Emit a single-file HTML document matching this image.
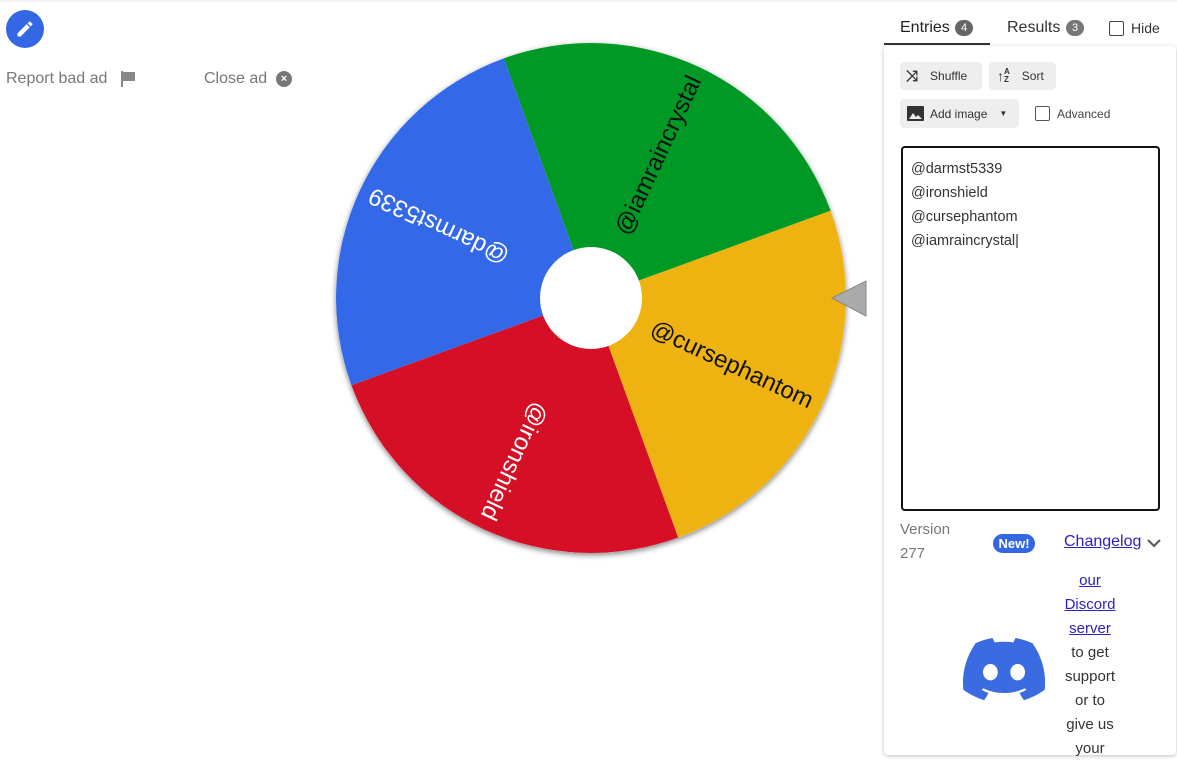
<!DOCTYPE html>
<html><head><meta charset="utf-8"><style>
body{margin:0;width:1177px;height:766px;overflow:hidden;background:#fff;font-family:"Liberation Sans",sans-serif;position:relative}
.a{position:absolute}
.btn{position:absolute;background:#eeeeee;border-radius:4px;font-size:12px;color:#333;display:flex;align-items:center}
a{color:#2a1fc0;text-decoration:underline}
</style></head><body>
<div class="a" style="left:0;top:0;width:1177px;height:3px;background:linear-gradient(#eee,#fff)"></div>
<div class="a" style="left:6px;top:10px;width:38px;height:38px;border-radius:50%;background:#3367e4"></div>
<svg class="a" style="left:15px;top:19px" width="20" height="20" viewBox="0 0 24 24"><path fill="#fff" d="M3 17.25V21h3.75L17.81 9.94l-3.75-3.75L3 17.25zM20.71 7.04a1 1 0 000-1.41l-2.34-2.34a1 1 0 00-1.41 0l-1.83 1.83 3.75 3.75 1.83-1.83z"/></svg>
<div class="a" style="left:6px;top:70px;font-size:16px;color:#777">Report bad ad</div>
<svg class="a" style="left:120px;top:70px" width="18" height="18" viewBox="0 0 18 18"><rect x="1" y="1" width="2" height="16" fill="#888"/><path d="M3 2h12v9H3z" fill="#888"/></svg>
<div class="a" style="left:204px;top:70px;font-size:16px;color:#777">Close ad</div>
<div class="a" style="left:276px;top:71px;width:16px;height:16px;border-radius:50%;background:#777;color:#fff;font-size:11px;text-align:center;line-height:16px;font-weight:bold">×</div>

<svg class="a" style="left:0;top:0" width="880" height="766">
<defs><filter id="s" x="-10%" y="-10%" width="120%" height="120%"><feDropShadow dx="0" dy="2" stdDeviation="3" flood-opacity="0.5"/></filter></defs>
<g transform="translate(591,298)">
<circle r="255" fill="#fff" filter="url(#s)"/>
<path d="M0 0 L-87.2 -239.6 A255 255 0 0 1 239.6 -87.2Z" fill="#009925"/>
<path d="M0 0 L239.6 -87.2 A255 255 0 0 1 87.2 239.6Z" fill="#eeb211"/>
<path d="M0 0 L87.2 239.6 A255 255 0 0 1 -239.6 87.2Z" fill="#d50f25"/>
<path d="M0 0 L-239.6 87.2 A255 255 0 0 1 -87.2 -239.6Z" fill="#3369e8"/>
<circle r="51" fill="#fff"/>
<g font-size="24" dominant-baseline="middle" text-anchor="end" font-family="Liberation Sans,sans-serif">
<text transform="rotate(-65)" x="244" y="2" fill="#111">@iamraincrystal</text>
<text transform="rotate(25)" x="244" y="2" fill="#111">@cursephantom</text>
<text transform="rotate(115)" x="244" y="2" fill="#fff">@ironshield</text>
<text transform="rotate(205)" x="244" y="2" fill="#fff">@darmst5339</text>
</g></g>
<path d="M832 298 L866 281 L866 316Z" fill="#aaa" stroke="#888" stroke-width="1"/>
</svg>

<div class="a" style="left:900px;top:19px;font-size:16px;color:#222">Entries</div>
<div class="a" style="left:955px;top:20px;width:18px;height:16px;border-radius:8px;background:#666;color:#fff;font-size:11px;text-align:center;line-height:16px">4</div>
<div class="a" style="left:884px;top:43px;width:106px;height:2px;background:#333"></div>
<div class="a" style="left:1007px;top:19px;font-size:16px;color:#333">Results</div>
<div class="a" style="left:1066px;top:20px;width:18px;height:16px;border-radius:8px;background:#777;color:#fff;font-size:11px;text-align:center;line-height:16px">3</div>
<div class="a" style="left:1109px;top:21px;width:13px;height:13px;border:1.5px solid #444;border-radius:2px"></div>
<div class="a" style="left:1131px;top:20px;font-size:14px;color:#333">Hide</div>

<div class="a" style="left:884px;top:46px;width:292px;height:709px;background:#fff;border-radius:4px;box-shadow:0 1px 4px rgba(0,0,0,.25)"></div>
<div class="btn" style="left:900px;top:62px;width:82px;height:28px"><span style="margin-left:6px;font-size:15px;font-weight:bold">⤨</span><span style="margin-left:12px">Shuffle</span></div>
<div class="btn" style="left:989px;top:62px;width:67px;height:28px"><span style="margin-left:8px;font-size:14px;font-weight:bold">↑</span><span style="font-size:8px;font-weight:bold;line-height:8px">A<br>Z</span><span style="margin-left:12px">Sort</span></div>
<div class="btn" style="left:900px;top:99px;width:119px;height:29px"><svg style="margin-left:7px" width="17" height="15" viewBox="0 0 17 15"><rect width="17" height="15" rx="1" fill="#333"/><path d="M2 13 L6 7 L9 11 L11 9 L15 13Z" fill="#eee"/></svg><span style="margin-left:6px">Add image</span><span style="margin-left:12px;font-size:8px">▼</span></div>
<div class="a" style="left:1035px;top:106px;width:13px;height:13px;border:1.5px solid #555;border-radius:2px"></div>
<div class="a" style="left:1057px;top:107px;font-size:12px;color:#444">Advanced</div>
<div class="a" style="left:901px;top:146px;width:259px;height:365px;border:2px solid #111;border-radius:4px;font-size:14.5px;color:#333;line-height:24px;padding:9px 0 0 8px;box-sizing:border-box">@darmst5339<br>@ironshield<br>@cursephantom<br>@iamraincrystal|</div>
<div class="a" style="left:900px;top:518px;font-size:15px;color:#777;line-height:24px">Version<br>277</div>
<div class="a" style="left:993px;top:534px;width:42px;height:19px;border-radius:10px;background:#3367e4;color:#fff;font-size:13px;font-weight:bold;text-align:center;line-height:19px">New!</div>
<div class="a" style="left:1064px;top:533px;font-size:16px"><a>Changelog</a></div>
<svg class="a" style="left:1146px;top:537px" width="16" height="12"><path d="M2 3 L8 9 L14 3" stroke="#555" stroke-width="2" fill="none"/></svg>
<div class="a" style="left:1061px;top:569px;width:58px;font-size:15px;color:#333;line-height:24px;text-align:center"><a>our</a><br><a>Discord</a><br><a>server</a><br>to get support or to give us your</div>
<svg class="a" style="left:963px;top:638px" width="82" height="62" viewBox="0 0 127 96"><path fill="#3b6be0" d="M107.7 8.07A105.15 105.15 0 0081.47 0a72 72 0 00-3.360 6.83 97.68 97.68 0 00-29.11 0A72.37 72.37 0 0045.64 0a105.89 105.89 0 00-26.25 8.09C2.79 32.65-1.71 56.6.54 80.21a105.73 105.73 0 0032.17 16.15 77.7 77.7 0 006.89-11.11 68.42 68.42 0 01-10.85-5.18c.91-.66 1.8-1.34 2.66-2a75.57 75.57 0 0064.32 0c.87.71 1.76 1.39 2.66 2a68.68 68.68 0 01-10.870 5.19 77 77 0 006.89 11.1 105.25 105.25 0 0032.19-16.14c2.64-27.38-4.51-51.11-18.9-72.15zM42.45 65.69C36.18 65.69 31 60 31 53s5-12.74 11.44-12.74S54 46 53.89 53s-5.05 12.69-11.44 12.69zm42.24 0C78.41 65.69 73.25 60 73.25 53s5-12.74 11.44-12.74S96.23 46 96.12 53s-5.04 12.690-11.43 12.69z"/></svg>
</body></html>
